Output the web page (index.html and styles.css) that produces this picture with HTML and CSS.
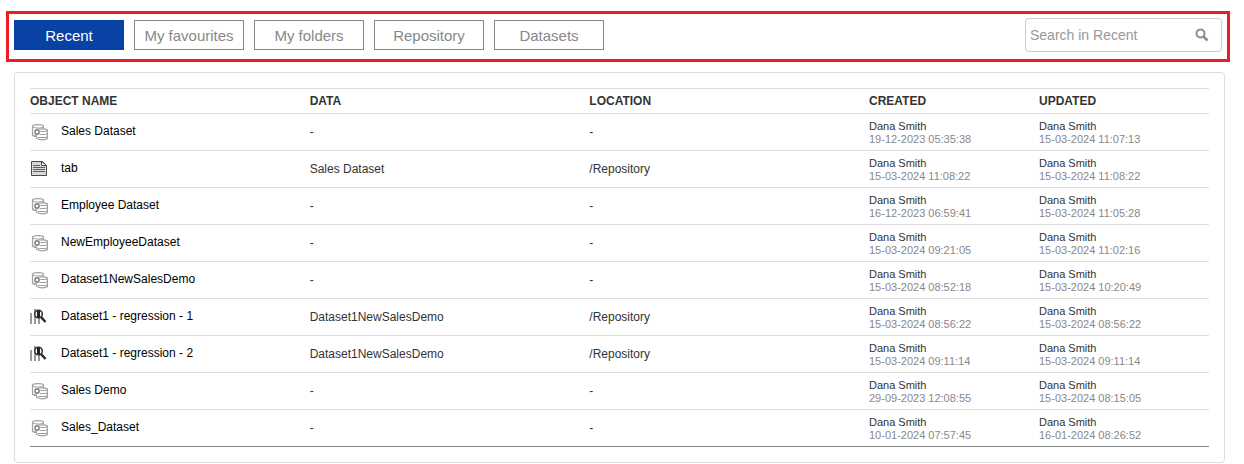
FILE: index.html
```html
<!DOCTYPE html>
<html lang="en">
<head>
  <meta charset="UTF-8">
  <meta name="viewport" content="width=device-width, initial-scale=1.0">
  <title>Recent</title>
  <link rel="stylesheet" href="styles.css">
</head>
<body>
  <!-- Icons shared by the rows -->
  <svg class="sprite" aria-hidden="true">
    <symbol id="icon-dataset" viewBox="0 0 18 18">
      <path d="M2.500 3.200c0-2.200 11-2.200 11 0v9c-1 1.800-10 1.800-11 0z" fill="#fff" stroke="#a0a0a0" stroke-width="1.200"/>
      <path d="M3 4c2 1.500 8 1.500 10 0M3 11.500c1 1 2 1.300 4 1.400" fill="none" stroke="#a0a0a0"/>
      <path d="M6.500 7c2-1.600 9-1.600 11 0v8.500c-2 1.800-9 1.800-11-.3z" fill="#fff" stroke="#a0a0a0" stroke-width="1.200"/>
      <path d="M9.500 8.500h5c1.500 0 2.500-.3 3-.8M9.500 11.500h5c1.500 0 2.500-.3 3-.8M8 14.500h6.500c1.500 0 2.500-.3 3-.8" fill="none" stroke="#a0a0a0" stroke-width="1.200"/>
      <circle cx="7" cy="9" r="3.300" fill="#fff"/>
      <circle cx="7" cy="9" r="2.100" fill="#fff" stroke="#858585" stroke-width="1.600"/>
    </symbol>
    <symbol id="icon-document" viewBox="0 0 18 18">
      <path d="M1.500 1.500h11l4 4v10h-15z" fill="#d8d8d8" stroke="#484848"/>
      <path d="M11.500 1.500v4h5z" fill="#fff" stroke="#484848"/>
      <path d="M3 5.500h7M3 7.500h12M3 9.500h12M3 11.500h12" stroke="#606060"/>
    </symbol>
    <symbol id="icon-regression" viewBox="0 0 18 18">
      <path d="M0 5h2v11H0zM4 1h2v15H4zM8 9h2v7H8z" fill="#999"/>
      <circle cx="8.500" cy="6" r="3.800" fill="#fff" stroke="#2c2c2c" stroke-width="1.500"/>
      <path d="M7 3h3v6H7z" fill="#222"/>
      <path d="M11 9l4.500 5" stroke="#2c2c2c" stroke-width="2.600"/>
    </symbol>
  </svg>

  <!-- Toolbar -->
  <header class="toolbar">
    <nav class="tabs">
      <button type="button" class="tab active">Recent</button>
      <button type="button" class="tab">My favourites</button>
      <button type="button" class="tab">My folders</button>
      <button type="button" class="tab">Repository</button>
      <button type="button" class="tab">Datasets</button>
    </nav>
    <form class="search">
      <input type="search" class="search-input" placeholder="Search in Recent" aria-label="Search in Recent">
      <button type="submit" class="search-button" aria-label="Search">
        <svg width="14" height="14" viewBox="0 0 14 14">
          <circle cx="5.500" cy="5.500" r="4" fill="none" stroke="#8c8c8c" stroke-width="2"/>
          <path d="M8.500 8.500l4 4" stroke="#8c8c8c" stroke-width="2.600"/>
        </svg>
      </button>
    </form>
  </header>

  <!-- Object list -->
  <main class="panel">
    <table class="objects">
      <thead>
        <tr>
          <th>OBJECT NAME</th>
          <th>DATA</th>
          <th>LOCATION</th>
          <th class="col-date">CREATED</th>
          <th class="col-date">UPDATED</th>
        </tr>
      </thead>
      <tbody>
        <tr>
          <td><a href="#" class="name"><svg class="icon"><use href="#icon-dataset"/></svg><span>Sales Dataset</span></a></td>
          <td>-</td>
          <td>-</td>
          <td class="stamp">Dana Smith<time>19-12-2023 05:35:38</time></td>
          <td class="stamp">Dana Smith<time>15-03-2024 11:07:13</time></td>
        </tr>
        <tr>
          <td><a href="#" class="name"><svg class="icon"><use href="#icon-document"/></svg><span>tab</span></a></td>
          <td>Sales Dataset</td>
          <td>/Repository</td>
          <td class="stamp">Dana Smith<time>15-03-2024 11:08:22</time></td>
          <td class="stamp">Dana Smith<time>15-03-2024 11:08:22</time></td>
        </tr>
        <tr>
          <td><a href="#" class="name"><svg class="icon"><use href="#icon-dataset"/></svg><span>Employee Dataset</span></a></td>
          <td>-</td>
          <td>-</td>
          <td class="stamp">Dana Smith<time>16-12-2023 06:59:41</time></td>
          <td class="stamp">Dana Smith<time>15-03-2024 11:05:28</time></td>
        </tr>
        <tr>
          <td><a href="#" class="name"><svg class="icon"><use href="#icon-dataset"/></svg><span>NewEmployeeDataset</span></a></td>
          <td>-</td>
          <td>-</td>
          <td class="stamp">Dana Smith<time>15-03-2024 09:21:05</time></td>
          <td class="stamp">Dana Smith<time>15-03-2024 11:02:16</time></td>
        </tr>
        <tr>
          <td><a href="#" class="name"><svg class="icon"><use href="#icon-dataset"/></svg><span>Dataset1NewSalesDemo</span></a></td>
          <td>-</td>
          <td>-</td>
          <td class="stamp">Dana Smith<time>15-03-2024 08:52:18</time></td>
          <td class="stamp">Dana Smith<time>15-03-2024 10:20:49</time></td>
        </tr>
        <tr>
          <td><a href="#" class="name"><svg class="icon"><use href="#icon-regression"/></svg><span>Dataset1 - regression - 1</span></a></td>
          <td>Dataset1NewSalesDemo</td>
          <td>/Repository</td>
          <td class="stamp">Dana Smith<time>15-03-2024 08:56:22</time></td>
          <td class="stamp">Dana Smith<time>15-03-2024 08:56:22</time></td>
        </tr>
        <tr>
          <td><a href="#" class="name"><svg class="icon"><use href="#icon-regression"/></svg><span>Dataset1 - regression - 2</span></a></td>
          <td>Dataset1NewSalesDemo</td>
          <td>/Repository</td>
          <td class="stamp">Dana Smith<time>15-03-2024 09:11:14</time></td>
          <td class="stamp">Dana Smith<time>15-03-2024 09:11:14</time></td>
        </tr>
        <tr>
          <td><a href="#" class="name"><svg class="icon"><use href="#icon-dataset"/></svg><span>Sales Demo</span></a></td>
          <td>-</td>
          <td>-</td>
          <td class="stamp">Dana Smith<time>29-09-2023 12:08:55</time></td>
          <td class="stamp">Dana Smith<time>15-03-2024 08:15:05</time></td>
        </tr>
        <tr>
          <td><a href="#" class="name"><svg class="icon"><use href="#icon-dataset"/></svg><span>Sales_Dataset</span></a></td>
          <td>-</td>
          <td>-</td>
          <td class="stamp">Dana Smith<time>10-01-2024 07:57:45</time></td>
          <td class="stamp">Dana Smith<time>16-01-2024 08:26:52</time></td>
        </tr>
      </tbody>
    </table>
  </main>
</body>
</html>
```
FILE: styles.css
```css
* {
  box-sizing: border-box;
}

body {
  margin: 0;
  padding-top: 11px;
  background-color: #fff;
  color: #333;
  font-family: "Liberation Sans", Arial, sans-serif;
  font-size: 12px;
}

button,
input {
  font-family: inherit;
}

.sprite {
  display: none;
}

/* Toolbar */
.toolbar {
  display: flex;
  justify-content: space-between;
  align-items: center;
  margin: 0 14px 10px 6px;
  padding: 4px 5px 7px;
  border: 3px solid #ed1c24;
}

.tabs {
  display: flex;
  gap: 10px;
}

.tab {
  width: 110px;
  height: 30px;
  padding: 0;
  border: 1px solid #888;
  background-color: #fff;
  color: #888;
  font-size: 15px;
  cursor: pointer;
}

.tab.active {
  border-color: #0842a5;
  background-color: #0842a5;
  color: #fff;
}

.search {
  display: flex;
  align-items: center;
  width: 197px;
  height: 34px;
  padding: 0 12px 0 4px;
  border: 1px solid #ccc;
  border-radius: 4px;
}

.search-input {
  flex: 1;
  min-width: 0;
  padding: 0;
  border: 0;
  outline: 0;
  background: none;
  color: #333;
  font-size: 14px;
}

.search-input::placeholder {
  color: #999;
}

.search-button {
  display: flex;
  padding: 0;
  border: 0;
  background: none;
  cursor: pointer;
}

/* Object list */
.panel {
  margin: 0 19px 0 14px;
  padding: 15px;
  border: 1px solid #ddd;
  border-radius: 4px;
}

.objects {
  width: 100%;
  table-layout: fixed;
  border-collapse: separate;
  border-spacing: 0;
  border-top: 1px solid #ddd;
  border-bottom: 1px solid #888;
}

.objects th,
.objects td {
  padding: 0;
  border-bottom: 1px solid #ddd;
  text-align: left;
  vertical-align: middle;
}

.objects th {
  height: 25px;
}

.objects td {
  height: 37px;
}

.objects tr:last-child td {
  height: 36px;
  border-bottom: 0;
}

.col-date {
  width: 170px;
}

.name {
  display: flex;
  align-items: center;
  gap: 13px;
  color: #000;
  text-decoration: none;
}

.name span {
  padding-bottom: 2px;
}

.icon {
  width: 18px;
  height: 18px;
}

.objects .stamp {
  padding-top: 2px;
  font-size: 11px;
  line-height: 13px;
}

.stamp time {
  display: block;
  color: #888;
}
```
